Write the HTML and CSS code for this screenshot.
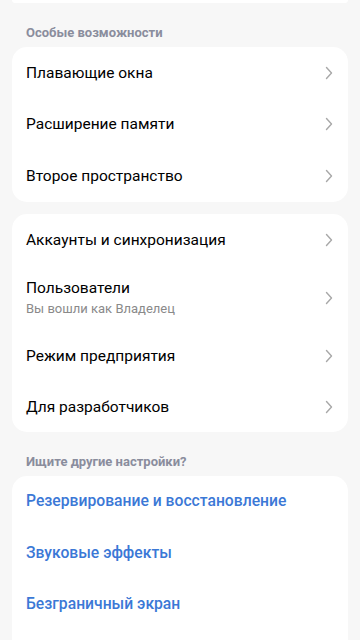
FILE: index.html
```html
<!DOCTYPE html>
<html lang="ru">
<head>
<meta charset="utf-8">
<link rel="stylesheet" href="styles.css">
</head>
<body>
<div class="page">
  <div class="card card-top"></div>

  <div class="section-title">Особые возможности</div>
  <div class="card">
    <div class="row"><span class="label">Плавающие окна</span><svg class="chev" viewBox="0 0 8 14"><path d="M1.5 1.5 L6.5 7 L1.5 12.5"/></svg></div>
    <div class="row"><span class="label">Расширение памяти</span><svg class="chev" viewBox="0 0 8 14"><path d="M1.5 1.5 L6.5 7 L1.5 12.5"/></svg></div>
    <div class="row"><span class="label">Второе пространство</span><svg class="chev" viewBox="0 0 8 14"><path d="M1.5 1.5 L6.5 7 L1.5 12.5"/></svg></div>
  </div>

  <div class="card card-gap">
    <div class="row"><span class="label">Аккаунты и синхронизация</span><svg class="chev" viewBox="0 0 8 14"><path d="M1.5 1.5 L6.5 7 L1.5 12.5"/></svg></div>
    <div class="row row-tall"><div class="texts"><span class="label">Пользователи</span><span class="sub">Вы вошли как Владелец</span></div><svg class="chev" viewBox="0 0 8 14"><path d="M1.5 1.5 L6.5 7 L1.5 12.5"/></svg></div>
    <div class="row"><span class="label">Режим предприятия</span><svg class="chev" viewBox="0 0 8 14"><path d="M1.5 1.5 L6.5 7 L1.5 12.5"/></svg></div>
    <div class="row"><span class="label">Для разработчиков</span><svg class="chev" viewBox="0 0 8 14"><path d="M1.5 1.5 L6.5 7 L1.5 12.5"/></svg></div>
  </div>

  <div class="section-title">Ищите другие настройки?</div>
  <div class="card card-last">
    <div class="row"><span class="link">Резервирование и восстановление</span></div>
    <div class="row"><span class="link">Звуковые эффекты</span></div>
    <div class="row"><span class="link">Безграничный экран</span></div>
  </div>
</div>
</body>
</html>
```

FILE: styles.css
```css
* { box-sizing: border-box; }
html, body { margin: 0; padding: 0; }
body {
  background: #f7f7f7;
  font-family: Roboto, "Noto Sans", sans-serif;
  width: 360px;
  height: 640px;
  overflow: hidden;
}
.page {
  padding: 0 12px;
  display: flex;
  flex-direction: column;
}
.card {
  background: #ffffff;
  border-radius: 15px;
  display: flex;
  flex-direction: column;
}
.card-top {
  height: 3px;
  border-radius: 0 0 15px 15px;
}
.card-gap { margin-top: 12px; }
.card-last { border-radius: 15px 15px 0 0; min-height: 170px; }
.section-title {
  height: 44px;
  padding: 21px 0 0 14px;
  font-size: 13px;
  font-weight: 700;
  color: #8a8d9d;
  line-height: 17px;
}
.row {
  height: 51.5px;
  display: flex;
  align-items: center;
  justify-content: space-between;
  padding: 0 15px 0 14px;
}
.card-gap .row { height: 52px; }
.card-gap .row.row-tall { height: 64px; }
.card-gap .row:last-child { height: 50px; }
.texts { display: flex; flex-direction: column; }
.label {
  font-size: 15.5px;
  color: #000000;
  line-height: 20px;
}
.sub {
  font-size: 13px;
  color: #8a8a8a;
  line-height: 17px;
  margin-top: 2px;
}
.link {
  font-size: 15.7px;
  color: #3b78d6;
  font-weight: 500;
  line-height: 20px;
}
.chev {
  width: 8px;
  height: 14px;
  fill: none;
  stroke: #a8a8a8;
  stroke-width: 1.4;
  stroke-linecap: round;
  stroke-linejoin: round;
}
```
